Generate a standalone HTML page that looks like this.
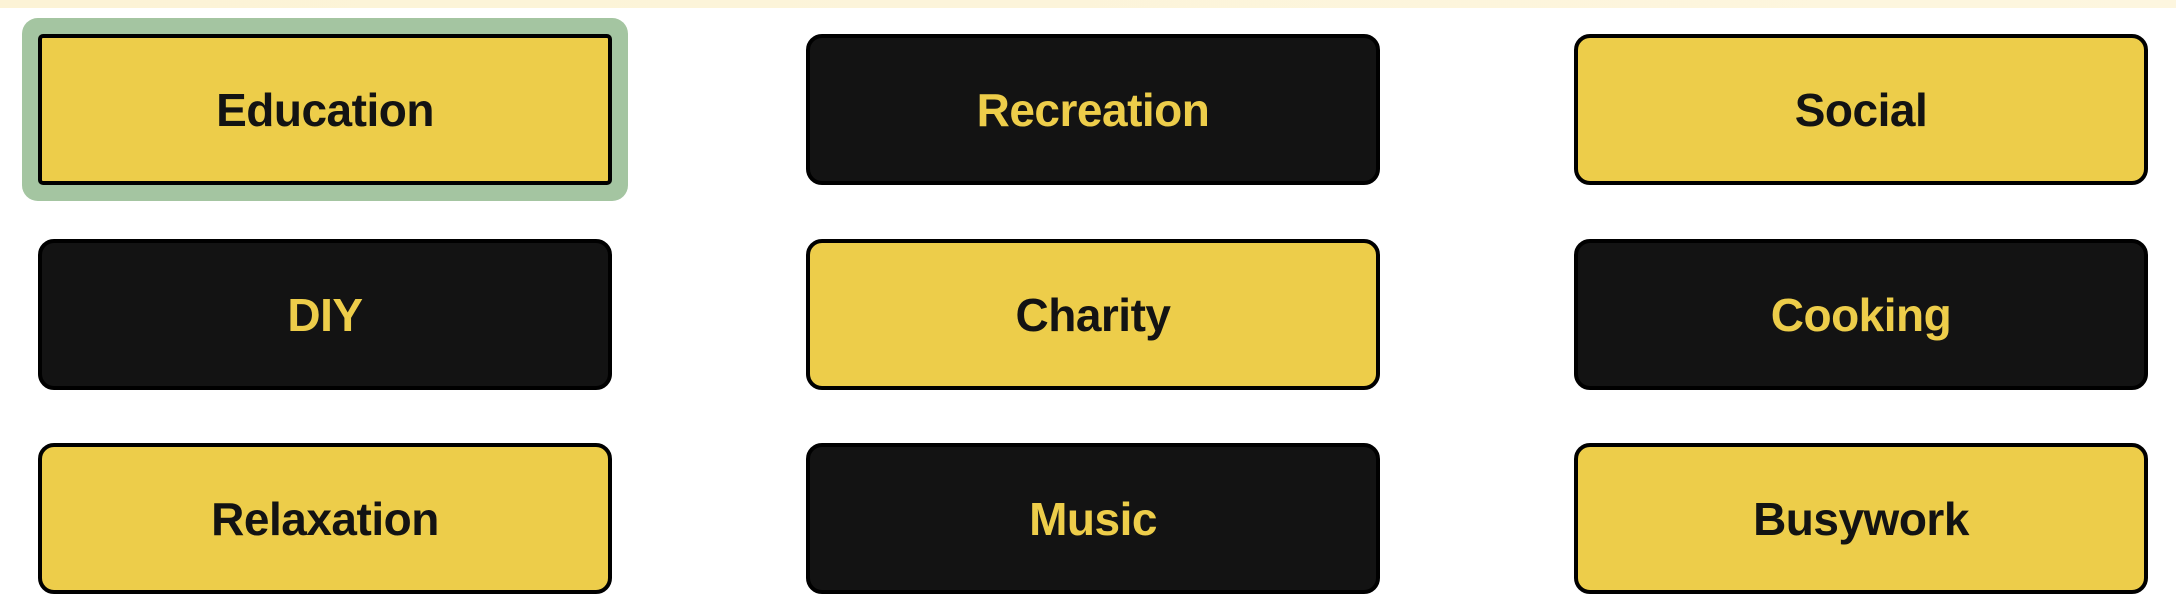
<!DOCTYPE html>
<html><head><style>
html,body{margin:0;padding:0;width:2176px;height:606px;background:#fff;overflow:hidden;font-family:"Liberation Sans",Arial,sans-serif;}
.top{position:absolute;left:0;top:0;width:2176px;height:8px;background:linear-gradient(90deg,#fcf3d6,#fdf6df);}
.b{position:absolute;width:574px;height:151px;box-sizing:border-box;border:4px solid #000;border-radius:16px;display:flex;align-items:center;justify-content:center;font-weight:bold;font-size:46px;letter-spacing:-0.5px;}
.y{background:#edcd4a;color:#131313;}
.k{background:#131313;color:#edcd4a;}
</style></head><body>
<div class="top"></div>
<div class="b y" style="left:38px;top:34px;border-radius:5px;box-shadow:0 0 0 16px #a4c5a1;">Education</div>
<div class="b k" style="left:806px;top:34px">Recreation</div>
<div class="b y" style="left:1574px;top:34px">Social</div>
<div class="b k" style="left:38px;top:239px">DIY</div>
<div class="b y" style="left:806px;top:239px">Charity</div>
<div class="b k" style="left:1574px;top:239px">Cooking</div>
<div class="b y" style="left:38px;top:443px">Relaxation</div>
<div class="b k" style="left:806px;top:443px">Music</div>
<div class="b y" style="left:1574px;top:443px">Busywork</div>
</body></html>
